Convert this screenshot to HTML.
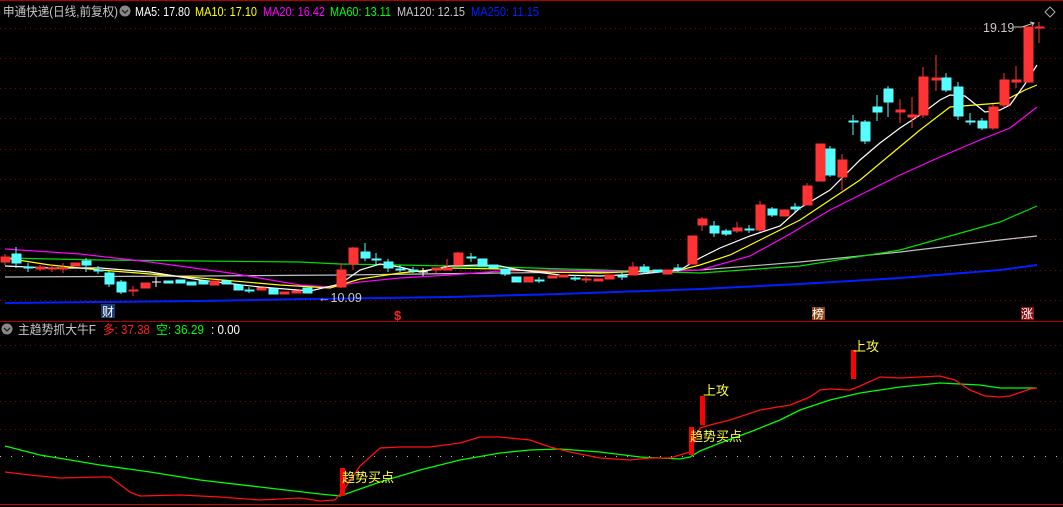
<!DOCTYPE html>
<html><head><meta charset="utf-8"><style>
html,body{margin:0;padding:0;background:#000;width:1063px;height:507px;overflow:hidden}
svg{display:block}
text{font-family:"Liberation Sans","Noto Sans CJK SC",sans-serif}
</style></head><body>
<svg width="1063" height="507" xmlns="http://www.w3.org/2000/svg">
<rect width="1063" height="507" fill="#000"/>
<line x1="0" y1="0.5" x2="1063" y2="0.5" stroke="#b00000"/>
<g stroke="#8b0000" stroke-dasharray="1,4">
<line x1="0" y1="28.5" x2="1063" y2="28.5"/><line x1="0" y1="58.5" x2="1063" y2="58.5"/>
<line x1="0" y1="88.5" x2="1063" y2="88.5"/><line x1="0" y1="118.5" x2="1063" y2="118.5"/>
<line x1="0" y1="149.5" x2="1063" y2="149.5"/><line x1="0" y1="179.5" x2="1063" y2="179.5"/>
<line x1="0" y1="209.5" x2="1063" y2="209.5"/><line x1="0" y1="239.5" x2="1063" y2="239.5"/>
<line x1="0" y1="270.5" x2="1063" y2="270.5"/><line x1="0" y1="300.5" x2="1063" y2="300.5"/>
<line x1="0" y1="345.5" x2="1063" y2="345.5"/><line x1="0" y1="373.5" x2="1063" y2="373.5"/>
<line x1="0" y1="401.5" x2="1063" y2="401.5"/><line x1="0" y1="429.5" x2="1063" y2="429.5"/>
</g>
<line x1="0" y1="456.5" x2="1063" y2="456.5" stroke="#bbb" stroke-dasharray="1,10"/>
<line x1="0" y1="321.5" x2="1063" y2="321.5" stroke="#b00000"/>
<line x1="0" y1="504.5" x2="1063" y2="504.5" stroke="#d00000"/>

<g fill="none" stroke-width="1.2">
<polyline stroke="#0020ff" stroke-width="2" points="5,303 100,302 200,301 310,299 450,297 560,294 700,289 800,284 900,278 1000,270 1037,265"/>
<polyline stroke="#c0c0c0" points="5,277 200,276 340,275 500,273 600,272 700,270 800,262 900,252 1000,240 1037,236"/>
<polyline stroke="#00e000" points="5,258 100,260 200,261 300,262 340,264 400,265 500,267 600,270 700,273 800,266 900,250 1000,222 1037,206"/>
<polyline stroke="#ff00ff" points="5,249 80,254 150,262 230,273 300,285 330,287 360,282 400,278 450,275 500,271 550,270 600,271 650,272 700,270 750,256 790,234 830,210 870,190 900,175 940,157 980,140 1010,128 1037,107"/>
<polyline stroke="#ffff00" points="5,258 50,265 100,270 200,278 280,285 330,288 360,279 400,273 450,268 500,269 550,272 600,273 650,271 680,270 700,265 730,255 760,240 800,220 830,200 860,180 890,155 920,130 950,107 1000,103 1025,90 1037,85"/>
<polyline stroke="#ffffff" points="5,266 50,268 100,268 150,272 200,280 260,287 310,291 340,284 360,270 380,264 400,267 420,272 450,266 480,265 500,266 520,270 560,275 600,276 640,274 680,270 700,258 720,248 750,236 780,226 800,208 830,190 860,160 880,143 900,128 920,115 940,100 950,95 965,96 985,112 1000,110 1010,105 1025,84 1037,65"/>
</g>

<g fill="#ff3333" stroke="#ff3333">
<line x1="5" y1="254" x2="5" y2="265"/><rect x="1" y="257" width="9" height="5"/>
<line x1="40" y1="265" x2="40" y2="271"/><rect x="36" y="267" width="9" height="2"/>
<line x1="52" y1="264" x2="52" y2="272"/><rect x="48" y="268" width="9" height="1"/>
<line x1="63" y1="263" x2="63" y2="273"/><rect x="59" y="268" width="9" height="1"/>
<rect x="71" y="263" width="9" height="3"/>
<line x1="133" y1="286" x2="133" y2="296"/><rect x="129" y="290" width="9" height="1"/>
<rect x="141" y="283" width="9" height="5"/>
<rect x="210" y="281" width="9" height="4"/>
<rect x="257" y="288" width="9" height="2"/>
<rect x="280" y="292" width="9" height="2"/>
<rect x="292" y="291" width="9" height="2"/>
<line x1="341" y1="263" x2="341" y2="288"/><rect x="337" y="270" width="9" height="17"/>
<line x1="353" y1="247" x2="353" y2="270"/><rect x="349" y="248" width="9" height="16"/>
<line x1="436" y1="268" x2="436" y2="273"/><rect x="432" y="268" width="9" height="2"/>
<line x1="447" y1="259" x2="447" y2="270"/><rect x="443" y="268" width="9" height="2"/>
<line x1="458" y1="252" x2="458" y2="265"/><rect x="454" y="253" width="9" height="12"/>
<rect x="524" y="277" width="9" height="5"/>
<rect x="548" y="276" width="9" height="2"/>
<rect x="559" y="275" width="9" height="2"/>
<line x1="586" y1="275" x2="586" y2="283"/><rect x="582" y="279" width="9" height="1"/>
<rect x="594" y="279" width="9" height="2"/>
<rect x="605" y="275" width="9" height="4"/>
<line x1="633" y1="262" x2="633" y2="275"/><rect x="629" y="267" width="9" height="8"/>
<rect x="663" y="270" width="9" height="4"/>
<rect x="688" y="236" width="9" height="28"/>
<line x1="702" y1="217" x2="702" y2="231"/><rect x="698" y="219" width="9" height="6"/>
<line x1="737" y1="222" x2="737" y2="233"/><rect x="733" y="228" width="9" height="3"/>
<line x1="760" y1="201" x2="760" y2="232"/><rect x="756" y="205" width="9" height="25"/>
<rect x="780" y="210" width="9" height="6"/>
<line x1="807" y1="183" x2="807" y2="205"/><rect x="803" y="186" width="9" height="19"/>
<rect x="816" y="144" width="9" height="37"/>
<line x1="842" y1="154" x2="842" y2="190"/><rect x="838" y="160" width="9" height="17"/>
<line x1="900" y1="99" x2="900" y2="123"/><rect x="896" y="110" width="9" height="2"/>
<line x1="912" y1="97" x2="912" y2="128"/><rect x="908" y="115" width="9" height="2"/>
<line x1="923" y1="67" x2="923" y2="118"/><rect x="919" y="77" width="9" height="38"/>
<line x1="936" y1="55" x2="936" y2="91"/><rect x="932" y="78" width="9" height="2"/>
<line x1="993" y1="104" x2="993" y2="130"/><rect x="989" y="107" width="9" height="21"/>
<line x1="1004" y1="73" x2="1004" y2="107"/><rect x="1000" y="80" width="9" height="25"/>
<line x1="1016" y1="66" x2="1016" y2="88"/><rect x="1012" y="80" width="9" height="2"/>
<rect x="1024" y="27" width="9" height="55"/>
<line x1="1039" y1="22" x2="1039" y2="43"/><rect x="1035" y="27" width="9" height="1"/>
</g>
<g fill="#55ffff" stroke="#55ffff">
<line x1="16" y1="247" x2="16" y2="268"/><rect x="12" y="254" width="9" height="9"/>
<line x1="28" y1="263" x2="28" y2="272"/><rect x="24" y="267" width="9" height="1"/>
<line x1="86" y1="258" x2="86" y2="272"/><rect x="82" y="261" width="9" height="4"/>
<line x1="98" y1="266" x2="98" y2="274"/><rect x="94" y="270" width="9" height="1"/>
<line x1="109" y1="271" x2="109" y2="287"/><rect x="105" y="273" width="9" height="11"/>
<line x1="121" y1="280" x2="121" y2="294"/><rect x="117" y="282" width="9" height="10"/>
<rect x="164" y="281" width="9" height="2"/><rect x="176" y="280" width="9" height="3"/>
<rect x="187" y="282" width="9" height="3"/><rect x="199" y="281" width="9" height="3"/>
<rect x="222" y="281" width="9" height="3"/><rect x="234" y="285" width="9" height="5"/>
<line x1="249" y1="287" x2="249" y2="293"/><rect x="245" y="290" width="9" height="1"/>
<rect x="269" y="289" width="9" height="5"/>
<rect x="303" y="288" width="9" height="5"/>
<line x1="365" y1="243" x2="365" y2="261"/><rect x="361" y="252" width="9" height="6"/>
<line x1="376" y1="253" x2="376" y2="265"/><rect x="372" y="259" width="9" height="1"/>
<line x1="388" y1="259" x2="388" y2="272"/><rect x="384" y="262" width="9" height="6"/>
<line x1="400" y1="265" x2="400" y2="272"/><rect x="396" y="269" width="9" height="1"/>
<line x1="413" y1="267" x2="413" y2="273"/><rect x="409" y="270" width="9" height="1"/>
<line x1="471" y1="253" x2="471" y2="262"/><rect x="467" y="257" width="9" height="1"/>
<rect x="478" y="259" width="9" height="7"/><rect x="489" y="265" width="9" height="3"/>
<line x1="505" y1="269" x2="505" y2="276"/><rect x="501" y="269" width="9" height="5"/>
<rect x="512" y="277" width="9" height="5"/>
<line x1="539" y1="277" x2="539" y2="283"/><rect x="535" y="280" width="9" height="1"/>
<line x1="575" y1="275" x2="575" y2="281"/><rect x="571" y="278" width="9" height="1"/>
<line x1="622" y1="272" x2="622" y2="280"/><rect x="618" y="276" width="9" height="1"/>
<line x1="644" y1="264" x2="644" y2="274"/><rect x="640" y="267" width="9" height="5"/>
<rect x="653" y="270" width="9" height="2"/>
<line x1="678" y1="264" x2="678" y2="272"/><rect x="674" y="268" width="9" height="1"/>
<line x1="714" y1="221" x2="714" y2="237"/><rect x="710" y="226" width="9" height="7"/>
<line x1="726" y1="229" x2="726" y2="236"/><rect x="722" y="231" width="9" height="3"/>
<line x1="749" y1="225" x2="749" y2="233"/><rect x="745" y="229" width="9" height="1"/>
<line x1="772" y1="207" x2="772" y2="217"/><rect x="768" y="209" width="9" height="6"/>
<line x1="795" y1="203" x2="795" y2="212"/><rect x="791" y="207" width="9" height="2"/>
<line x1="830" y1="146" x2="830" y2="177"/><rect x="826" y="149" width="9" height="26"/>
<line x1="853" y1="115" x2="853" y2="135"/><rect x="849" y="121" width="9" height="1"/>
<line x1="865" y1="120" x2="865" y2="144"/><rect x="861" y="122" width="9" height="19"/>
<line x1="877" y1="95" x2="877" y2="121"/><rect x="873" y="107" width="9" height="5"/>
<line x1="888" y1="86" x2="888" y2="117"/><rect x="884" y="89" width="9" height="13"/>
<line x1="946" y1="73" x2="946" y2="92"/><rect x="942" y="78" width="9" height="12"/>
<line x1="958" y1="82" x2="958" y2="120"/><rect x="954" y="87" width="9" height="29"/>
<line x1="970" y1="113" x2="970" y2="125"/><rect x="966" y="121" width="9" height="1"/>
<line x1="982" y1="118" x2="982" y2="130"/><rect x="978" y="121" width="9" height="7"/>
</g>
<g stroke="#fff"><line x1="156" y1="277" x2="156" y2="287"/><line x1="152" y1="282" x2="161" y2="282"/>
<line x1="423" y1="268" x2="423" y2="276"/><line x1="419" y1="272" x2="428" y2="272"/></g>

<g font-size="12.5">
<text x="3" y="16" fill="#c8c8c8" textLength="115" lengthAdjust="spacingAndGlyphs">申通快递(日线,前复权)</text>
<text x="135" y="16" fill="#fff" textLength="55" lengthAdjust="spacingAndGlyphs">MA5: 17.80</text>
<text x="195" y="16" fill="#ffff00" textLength="62" lengthAdjust="spacingAndGlyphs">MA10: 17.10</text>
<text x="263" y="16" fill="#ff00ff" textLength="62" lengthAdjust="spacingAndGlyphs">MA20: 16.42</text>
<text x="330" y="16" fill="#00ff00" textLength="61" lengthAdjust="spacingAndGlyphs">MA60: 13.11</text>
<text x="397" y="16" fill="#c8c8c8" textLength="68" lengthAdjust="spacingAndGlyphs">MA120: 12.15</text>
<text x="471" y="16" fill="#0020ff" textLength="68" lengthAdjust="spacingAndGlyphs">MA250: 11.15</text>
</g>
<circle cx="125" cy="11" r="5.5" fill="#888"/><path d="M122,10 l3,3 l3,-3" stroke="#222" fill="none" stroke-width="1.3"/>
<path d="M1050,7 l5,5 l-5,5 l-5,-5z" stroke="#aaa" fill="none"/>
<text x="983" y="32" font-size="12.5" fill="#c8c8c8">19.19</text>
<path d="M1014,27 h8 l12,-4 m-4,-1 l4,1 l-2,3" stroke="#c8c8c8" fill="none"/>
<text x="318" y="302" font-size="12.5" fill="#c8c8c8">←10.09</text>
<rect x="101" y="304" width="14" height="14" fill="#1e3c6e"/><text x="102" y="316" font-size="12" fill="#fff">财</text>
<text x="394" y="320" font-size="13" fill="#ff2020" font-weight="bold">$</text>
<rect x="812" y="307" width="13" height="13" fill="#8b4513"/><text x="812" y="318" font-size="12" fill="#fff">榜</text>
<rect x="1021" y="307" width="13" height="13" fill="#8b1010"/><text x="1021" y="318" font-size="12" fill="#fff">涨</text>

<circle cx="7" cy="329" r="5.5" fill="#888"/><path d="M4,328 l3,3 l3,-3" stroke="#222" fill="none" stroke-width="1.3"/>
<g font-size="12.5">
<text x="18" y="334" fill="#c8c8c8" textLength="78" lengthAdjust="spacingAndGlyphs">主趋势抓大牛F</text>
<text x="103" y="334" fill="#ff2020" textLength="47" lengthAdjust="spacingAndGlyphs">多: 37.38</text>
<text x="156" y="334" fill="#00ff00" textLength="48" lengthAdjust="spacingAndGlyphs">空: 36.29</text>
<text x="211" y="334" fill="#fff" textLength="29" lengthAdjust="spacingAndGlyphs">: 0.00</text>
</g>
<g fill="none" stroke-width="1.3">
<polyline stroke="#00ff00" points="5,446 40,455 100,465 150,472 200,480 260,487 320,494 340,496 380,482 420,470 460,460 500,453 530,450 560,449 600,452 640,457 680,459 690,457 700,451 720,443 750,432 780,420 800,410 830,400 860,393 900,387 940,383 980,385 1000,388 1037,388"/>
<polyline stroke="#ff1010" points="5,472 30,475 60,478 100,477 110,477 130,492 140,496 180,495 220,497 260,500 300,498 320,501 335,500 345,488 360,466 380,448 400,447 430,447 460,443 480,437 500,437 530,440 550,447 570,452 600,458 630,460 650,458 670,458 690,452 700,428 710,425 730,420 760,410 790,405 810,397 820,390 830,389 850,390 860,386 880,377 900,378 920,377 940,376 955,380 970,390 985,396 1000,397 1010,396 1030,389 1037,388"/>
</g>
<g fill="#ff0000"><rect x="340" y="468" width="5" height="28"/><rect x="700" y="396" width="5" height="29"/><rect x="689" y="427" width="5" height="28"/><rect x="851" y="350" width="5" height="29"/></g>
<g font-size="13" fill="#ffff40">
<text x="342" y="482">趋势买点</text>
<text x="690" y="441">趋势买点</text>
<text x="703" y="395">上攻</text>
<text x="853" y="351">上攻</text>
</g>
</svg>
</body></html>
